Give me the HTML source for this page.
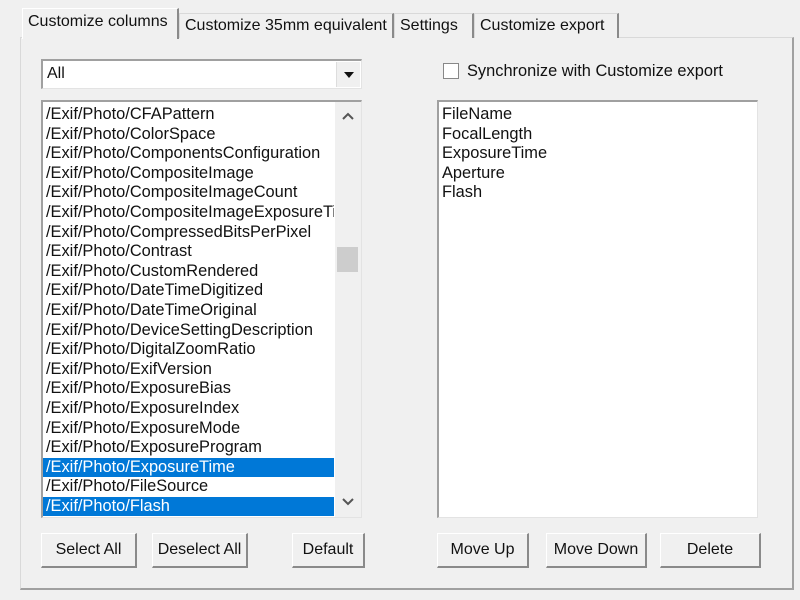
<!DOCTYPE html>
<html><head><meta charset="utf-8"><style>
*{box-sizing:border-box;margin:0;padding:0}
body{width:800px;height:600px;background:#f0f0f0;font-family:"Liberation Sans",sans-serif;font-size:15px;color:#111;position:relative;overflow:hidden}
.abs{position:absolute}
.panel{left:20px;top:37px;width:774px;height:553px;border:1px solid #d9d9d9;border-right:2px solid #a0a0a0;border-bottom:2px solid #a0a0a0;background:#f0f0f0}
.tab{position:absolute;top:13px;height:25px;border:1px solid #d9d9d9;border-bottom:none;border-right:2px solid #8a8a8a;background:#f0f0f0;padding:3px 0 0 5px;white-space:nowrap;font-size:16px}
.tab.act{top:8px;height:31px;padding-top:4px;z-index:2;border-left:1px solid #fff;border-top:1px solid #fff}
.box{background:#fff;border:2px solid #a0a0a0;border-right:1px solid #e3e3e3;border-bottom:1px solid #e3e3e3}
.item{height:19.6px;line-height:19.6px;padding-left:3px;white-space:nowrap;overflow:hidden;font-size:16.4px}
.sel{background:#0078d7;color:#fff}
.btn{position:absolute;height:35px;border:1px solid #fff;border-right:2px solid #8a8a8a;border-bottom:2px solid #8a8a8a;background:#f0f0f0;text-align:center;line-height:31px;font-size:16px}
</style></head><body>
<div class="abs panel"></div>
<div class="tab act" style="left:22px;width:157px">Customize columns</div>
<div class="tab" style="left:179px;width:215px">Customize 35mm equivalent</div>
<div class="tab" style="left:394px;width:80px">Settings</div>
<div class="tab" style="left:474px;width:145px">Customize export</div>

<div class="abs box" style="left:41px;top:59px;width:321px;height:30px;padding:4px 0 0 4px;font-size:16px">All
 <div class="abs" style="right:1px;top:1px;width:24px;height:25px;background:#f0f0f0;border-left:1px solid #ddd"><svg width="24" height="25"><path d="M7 10h10l-5 6z" fill="#111"/></svg></div></div>

<div class="abs box" style="left:41px;top:100px;width:321px;height:418px;padding-top:3px;overflow:hidden">
<div style="width:291px">
<div class="item">/Exif/Photo/CFAPattern</div>
<div class="item">/Exif/Photo/ColorSpace</div>
<div class="item">/Exif/Photo/ComponentsConfiguration</div>
<div class="item">/Exif/Photo/CompositeImage</div>
<div class="item">/Exif/Photo/CompositeImageCount</div>
<div class="item">/Exif/Photo/CompositeImageExposureTimes</div>
<div class="item">/Exif/Photo/CompressedBitsPerPixel</div>
<div class="item">/Exif/Photo/Contrast</div>
<div class="item">/Exif/Photo/CustomRendered</div>
<div class="item">/Exif/Photo/DateTimeDigitized</div>
<div class="item">/Exif/Photo/DateTimeOriginal</div>
<div class="item">/Exif/Photo/DeviceSettingDescription</div>
<div class="item">/Exif/Photo/DigitalZoomRatio</div>
<div class="item">/Exif/Photo/ExifVersion</div>
<div class="item">/Exif/Photo/ExposureBias</div>
<div class="item">/Exif/Photo/ExposureIndex</div>
<div class="item">/Exif/Photo/ExposureMode</div>
<div class="item">/Exif/Photo/ExposureProgram</div>
<div class="item sel">/Exif/Photo/ExposureTime</div>
<div class="item">/Exif/Photo/FileSource</div>
<div class="item sel">/Exif/Photo/Flash</div>
</div>
<div class="abs" style="left:292px;top:0;width:26px;height:418px;background:#f0f0f0">
<svg class="abs" style="left:0;top:4px" width="26" height="20"><path d="M8 13l5-5 5 5" stroke="#555" stroke-width="2" fill="none"/></svg>
<div class="abs" style="left:2px;top:145px;width:21px;height:25px;background:#cdcdcd"></div>
<svg class="abs" style="left:0;top:390px" width="26" height="20"><path d="M8 7l5 5 5-5" stroke="#555" stroke-width="2" fill="none"/></svg>
</div>
</div>

<div class="abs" style="left:443px;top:63px;width:16px;height:16px;background:#fff;border:1px solid #888"></div>
<div class="abs" style="left:467px;top:62px;font-size:16.4px">Synchronize with Customize export</div>

<div class="abs box" style="left:437px;top:100px;width:321px;height:418px;padding-top:3px">
<div class="item">FileName</div>
<div class="item">FocalLength</div>
<div class="item">ExposureTime</div>
<div class="item">Aperture</div>
<div class="item">Flash</div>
</div>

<div class="btn" style="left:41px;top:533px;width:96px">Select All</div>
<div class="btn" style="left:152px;top:533px;width:96px">Deselect All</div>
<div class="btn" style="left:292px;top:533px;width:73px">Default</div>
<div class="btn" style="left:437px;top:533px;width:92px">Move Up</div>
<div class="btn" style="left:546px;top:533px;width:101px">Move Down</div>
<div class="btn" style="left:660px;top:533px;width:101px">Delete</div>
</body></html>
